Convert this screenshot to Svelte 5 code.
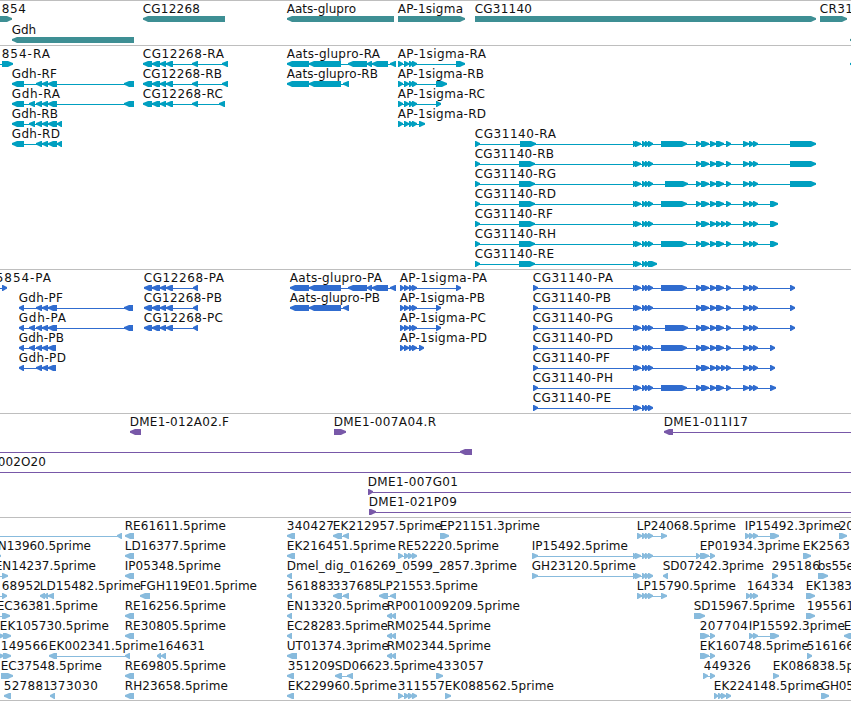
<script lang="ts">
  type Dir = "L" | "R";
  type Block = [number, number];

  interface Feature {
    name: string;
    from: number;
    to: number;
    dir: Dir;
    blocks: Block[];
    line?: Block;
  }

  interface Track {
    id: string;
    height: number;
    pitch: number;
    rows: Feature[][];
  }

  // name, label start, label end, strand, blocks, optional connector
  function f(name: string, from: number, to: number, dir: Dir, blocks: Block[], line?: Block): Feature {
    return { name, from, to, dir, blocks, line };
  }

  const genes: Feature[][] = [
    [
      f("854", 2, 26, "R", [[-8, 12]]),
      f("CG12268", 143, 200, "L", [[143, 225]]),
      f("Aats-glupro", 287, 356, "L", [[287, 394]]),
      f("AP-1sigma", 398, 463, "R", [[398, 465]]),
      f("CG31140", 475, 532, "R", [[475, 816]]),
      f("CR31", 820, 853, "R", [[820, 847]]),
    ],
    [f("Gdh", 12, 36, "L", [[12, 134]]), f("", 0, 0, "L", [[850, 880]])],
  ];

  const cgHead: Block[] = [[143, 152], [152, 160], [160, 166], [166, 173], [192, 198]];
  const gdhMid: Block[] = [[36, 42], [42, 48]];
  const apHead: Block[] = [[398, 403], [404, 409], [409, 413], [412, 417]];
  const five: Block[] = [[633, 636], [635, 641], [642, 646], [645, 649], [648, 653]];
  const mid: Block[] = [[696, 701], [701, 709], [710, 716], [716, 724], [726, 731]];
  const midF: Block[] = [[696, 701], [701, 709], [710, 716], [716, 721], [721, 726], [726, 731]];
  const three: Block[] = [[743, 749], [749, 754], [753, 758]];

  const transcripts: Feature[][] = [
    [
      f("854-RA", 2, 50, "R", [[2, 13]], [-5, 2]),
      f("CG12268-RA", 143, 224, "L", [...cgHead, [222, 228]]),
      f("Aats-glupro-RA", 287, 380, "L", [[287, 309], [309, 341], [348, 367], [367, 372], [372, 388], [390, 396]]),
      f("AP-1sigma-RA", 398, 486, "R", [...apHead, [456, 465]]),
      f("", 0, 0, "L", [[850, 860]]),
    ],
    [
      f("Gdh-RF", 12, 57, "L", [[12, 24], ...gdhMid, [48, 57], [124, 134]]),
      f("CG12268-RB", 143, 222, "L", [...cgHead, [222, 228]]),
      f("Aats-glupro-RB", 287, 378, "L", [[287, 309], [309, 341], [343, 349]]),
      f("AP-1sigma-RB", 398, 484, "R", [...apHead, [436, 447]]),
    ],
    [
      f("Gdh-RA", 12, 60, "L", [[12, 24], [29, 35], ...gdhMid, [48, 57], [124, 134]]),
      f("CG12268-RC", 143, 223, "L", [...cgHead, [219, 225]]),
      f("AP-1sigma-RC", 398, 485, "R", [...apHead, [436, 441]]),
    ],
    [
      f("Gdh-RB", 12, 58, "L", [[12, 24], [29, 35], ...gdhMid, [48, 57], [57, 62]]),
      f("AP-1sigma-RD", 398, 486, "R", [...apHead, [419, 425]]),
    ],
    [
      f("Gdh-RD", 12, 60, "L", [[12, 24], ...gdhMid, [48, 57], [57, 62]]),
      f("CG31140-RA", 475, 556, "R", [[475, 480], [520, 536], ...five, [661, 687], ...mid, ...three, [790, 816]]),
    ],
    [f("CG31140-RB", 475, 554, "R", [[475, 480], [519, 535], ...five, ...mid, ...three, [790, 816]])],
    [f("CG31140-RG", 475, 556, "R", [[475, 480], [519, 535], ...five, [665, 688], ...mid, ...three, [790, 816]])],
    [f("CG31140-RD", 475, 556, "R", [[475, 480], [519, 535], ...five, [661, 687], ...mid, ...three, [770, 778]])],
    [f("CG31140-RF", 475, 553, "R", [[475, 480], [519, 535], ...five, ...midF, ...three, [770, 778]])],
    [f("CG31140-RH", 475, 556, "R", [[475, 480], [519, 535], ...five, [661, 687], ...mid, ...three, [770, 778]])],
    [f("CG31140-RE", 475, 554, "R", [[475, 480], [519, 535], [633, 636], [635, 641], [642, 646], [645, 649], [648, 657]])],
  ];

  const cgCds: Block[] = [[144, 152], [152, 160], [160, 166], [166, 173], [193, 198]];
  const apCds: Block[] = [[400, 404], [404, 409], [409, 413], [412, 417]];

  const proteins: Feature[][] = [
    [
      f("5854-PA", -4, 51, "R", [[2, 7]], [-5, 2]),
      f("CG12268-PA", 144, 224, "L", cgCds),
      f("Aats-glupro-PA", 290, 382, "L", [[290, 309], [309, 341], [348, 367], [367, 372], [372, 388], [390, 396]]),
      f("AP-1sigma-PA", 400, 487, "R", [...apCds, [456, 461]]),
      f("CG31140-PA", 533, 613, "R", [[533, 538], ...five, [661, 687], ...mid, ...three, [790, 795]]),
    ],
    [
      f("Gdh-PF", 19, 63, "L", [[19, 24], ...gdhMid, [48, 57], [124, 133]]),
      f("CG12268-PB", 144, 222, "L", cgCds),
      f("Aats-glupro-PB", 290, 380, "L", [[290, 309], [309, 341], [343, 349]]),
      f("AP-1sigma-PB", 400, 485, "R", [...apCds, [436, 441]]),
      f("CG31140-PB", 533, 611, "R", [[533, 538], ...five, ...mid, ...three, [790, 795]]),
    ],
    [
      f("Gdh-PA", 19, 66, "L", [[19, 24], [29, 35], ...gdhMid, [48, 57], [124, 133]]),
      f("CG12268-PC", 144, 223, "L", cgCds),
      f("AP-1sigma-PC", 400, 486, "R", [...apCds, [436, 441]]),
      f("CG31140-PG", 533, 613, "R", [[533, 538], ...five, [665, 688], ...mid, ...three, [790, 795]]),
    ],
    [
      f("Gdh-PB", 19, 64, "L", [[19, 24], [29, 35], ...gdhMid, [48, 56]]),
      f("AP-1sigma-PD", 400, 487, "R", [...apCds, [419, 424]]),
      f("CG31140-PD", 533, 613, "R", [[533, 538], ...five, [661, 687], ...mid, ...three, [770, 775]]),
    ],
    [
      f("Gdh-PD", 19, 66, "L", [[19, 24], ...gdhMid, [48, 56]]),
      f("CG31140-PF", 533, 610, "R", [[533, 538], ...five, ...midF, ...three, [770, 775]]),
    ],
    [f("CG31140-PH", 533, 613, "R", [[533, 538], ...five, [661, 687], ...mid, ...three, [770, 776]])],
    [f("CG31140-PE", 533, 611, "R", [[533, 538], ...five])],
  ];

  const clones: Feature[][] = [
    [
      f("DME1-012A02.F", 130, 229, "L", [[130, 141]]),
      f("DME1-007A04.R", 334, 436, "R", [[334, 346]]),
      f("DME1-011I17", 664, 748, "L", [[664, 673]], [673, 851]),
    ],
    [f("", 0, 0, "L", [[460, 472]], [0, 460])],
    [f("002O20", -2, 46, "L", [], [0, 851])],
    [f("DME1-007G01", 368, 458, "R", [[368, 373]], [373, 851])],
    [f("DME1-021P09", 369, 457, "R", [[369, 376]], [376, 851])],
  ];

  const lp: Block[] = [[637, 642], [642, 646], [645, 649], [648, 653], [661, 667]];
  const re5: Block[] = [[398, 403], [404, 409], [408, 413], [412, 417]];
  const pair: Block[] = [[333, 342], [343, 349]];
  const rm: Block[] = [[387, 392], [391, 396]];

  const ests: Feature[][] = [
    [
      f("", 0, 0, "L", [[117, 122]], [0, 117]),
      f("RE61611.5prime", 125, 226, "L", [[125, 134]]),
      f("340427", 287, 334, "L", [[287, 295]]),
      f("EK212957.5prime", 333, 442, "L", pair),
      f("EP21151.3prime", 440, 540, "R", [[440, 449]]),
      f("LP24068.5prime", 637, 736, "R", lp),
      f("IP15492.3prime", 745, 841, "R", [[745, 750], [749, 754], [753, 758], [770, 779]]),
      f("20", 839, 854, "R", [[839, 847]]),
    ],
    [
      f("N13960.5prime", -2, 91, "R", [[-4, 1]]),
      f("LD16377.5prime", 125, 226, "L", [[125, 134]]),
      f("EK216451.5prime", 287, 396, "L", [[287, 295]]),
      f("RE52220.5prime", 398, 499, "R", re5),
      f("IP15492.5prime", 532, 628, "R", [[532, 538], ...five, [696, 700], [700, 709], [710, 715]]),
      f("EP01934.3prime", 700, 800, "R", []),
      f("EK2563", 803, 850, "R", [[803, 811]]),
    ],
    [
      f("EN14237.5prime", -5, 96, "R", [[2, 8]], [-3, 2]),
      f("IP05348.5prime", 125, 221, "L", [[125, 134]]),
      f("Dmel_dig_016269_0599_2857.3prime", 287, 517, "L", [[287, 292]]),
      f("GH23120.5prime", 532, 636, "R", [[532, 538], ...five]),
      f("SD07242.3prime", 663, 764, "L", [[663, 668]]),
      f("295186", 772, 820, "R", [[772, 778]]),
      f("bs55e", 818, 854, "R", [[818, 828]]),
    ],
    [
      f("68952", 2, 41, "R", [[2, 7]], [-3, 2]),
      f("LD15482.5prime", 40, 141, "L", [[40, 45], [44, 48], [48, 54]]),
      f("FGH119E01.5prime", 140, 257, "L", [[140, 150]]),
      f("561883", 287, 334, "L", [[287, 292]]),
      f("337685", 333, 380, "L", pair),
      f("LP21553.5prime", 379, 478, "L", [[379, 388], [390, 396]]),
      f("LP15790.5prime", 637, 736, "R", lp),
      f("164334", 747, 794, "R", [[746, 751], [750, 754], [753, 758]]),
      f("EK1383", 806, 852, "R", [[806, 815]]),
    ],
    [
      f("EC36381.5prime", -3, 98, "R", [[2, 10]], [-3, 2]),
      f("RE16256.5prime", 125, 226, "L", [[125, 134]]),
      f("EN13320.5prime", 287, 389, "L", [[287, 292]]),
      f("RP001009209.5prime", 387, 520, "L", rm),
      f("SD15967.5prime", 694, 795, "R", [[694, 705]]),
      f("195561", 807, 854, "R", [[806, 815]]),
    ],
    [
      f("EK105730.5prime", 0, 109, "R", [[-4, 4], [3, 11]]),
      f("RE30805.5prime", 125, 226, "L", [[125, 134]]),
      f("EC28283.5prime", 287, 388, "L", [[287, 292]]),
      f("RM02544.5prime", 387, 491, "L", rm),
      f("207704", 700, 748, "R", [[700, 709], [710, 715]]),
      f("IP15592.3prime", 749, 845, "R", [[749, 754], [753, 758], [770, 779]]),
      f("E", 844, 852, "L", [[844, 854]]),
    ],
    [
      f("149566", 1, 48, "R", [[-4, 4], [3, 11]]),
      f("EK002341.5prime", 49, 158, "L", [[49, 57], [125, 130]]),
      f("164631", 158, 205, "L", [[157, 161], [161, 166]]),
      f("UT01374.3prime", 287, 389, "L", [[287, 297]]),
      f("RM02344.5prime", 387, 491, "L", rm),
      f("EK160748.5prime", 700, 809, "R", [[700, 709], [710, 715]]),
      f("516166", 807, 854, "R", [[807, 812]]),
    ],
    [
      f("EC37548.5prime", 1, 102, "R", [[1, 13]]),
      f("RE69805.5prime", 125, 226, "L", [[125, 134]]),
      f("351209", 288, 335, "L", [[287, 294]]),
      f("SD06623.5prime", 335, 436, "L", [[335, 342], [347, 353]]),
      f("433057", 436, 484, "R", [[436, 443]]),
      f("449326", 704, 751, "R", [[703, 708], [710, 715]]),
      f("EK086838.5prime", 773, 882, "R", [[773, 779]]),
    ],
    [
      f("527881", 4, 51, "L", [[4, 11]]),
      f("373030", 50, 98, "L", [[50, 55]]),
      f("RH23658.5prime", 125, 228, "L", [[125, 134]]),
      f("EK229960.5prime", 288, 397, "L", [[287, 294]]),
      f("311557", 398, 445, "R", re5),
      f("EK088562.5prime", 445, 554, "R", [[445, 451]]),
      f("EK224148.5prime", 714, 823, "R", [[714, 718], [718, 722], [721, 726], [726, 731]]),
      f("GH05", 821, 854, "R", [[821, 829]]),
    ],
  ];

  const tracks: Track[] = [
    { id: "genes", height: 44, pitch: 21, rows: genes },
    { id: "transcripts", height: 223, pitch: 20, rows: transcripts },
    { id: "proteins", height: 143, pitch: 20, rows: proteins },
    { id: "clones", height: 103, pitch: 20, rows: clones },
    { id: "ests", height: 182, pitch: 20, rows: ests },
  ];

  function arrow([a, b]: Block, dir: Dir) {
    // the head takes the last few pixels and keeps a stub of the body on short blocks
    const head = Math.min(5, b - a - 1);
    const sign = dir === "R" ? 1 : -1;
    const tail = dir === "R" ? a : b;
    const tip = dir === "R" ? b : a;
    const neck = tip - sign * head;
    const mid = tip - sign * head * 0.4;
    return `M${tail} 15H${neck}L${mid} 16.3L${tip} 17.1V18.7L${mid} 19.6L${neck} 21H${tail}Z`;
  }

  function connector(feature: Feature): Block | undefined {
    if (feature.line) return feature.line;
    if (feature.blocks.length < 2) return undefined;
    return [feature.blocks[0][0] + 1, feature.blocks[feature.blocks.length - 1][1] - 1];
  }
</script>

<main class="browser">
  {#each tracks as track (track.id)}
    <section class="track {track.id}">
      <svg width="851" height={track.height}>
        {#each track.rows as row, i}
          <g transform="translate(0 {i * track.pitch})">
            {#each row as feature}
              {@const line = connector(feature)}
              {#if line}
                <rect x={line[0]} y="18" width={line[1] - line[0]} height="1" />
              {/if}
              {#each feature.blocks as block}
                <path d={arrow(block, feature.dir)} />
              {/each}
              {#if feature.name}
                <text x={feature.from - 0.3} y="12" textLength={feature.to - feature.from + 0.3}>{feature.name}</text>
              {/if}
            {/each}
          </g>
        {/each}
      </svg>
    </section>
  {/each}
</main>

<style>
  :global(body) {
    margin: 0;
    background: #fff;
  }

  .browser {
    width: 851px;
    overflow: hidden;
    border-bottom: 1px solid #bebebe;
  }

  .track {
    border-top: 1px solid #bebebe;
  }

  svg {
    display: block;
    fill: currentColor;
  }

  text {
    fill: #111;
    font-family: "DejaVu Sans", sans-serif;
    font-size: 12px;
  }

  .genes {
    color: #3e8f94;
  }

  .transcripts {
    color: #009fc0;
  }

  .proteins {
    color: #306ccf;
  }

  .clones {
    color: #7858a8;
  }

  .ests {
    color: #88bbdd;
  }
</style>
